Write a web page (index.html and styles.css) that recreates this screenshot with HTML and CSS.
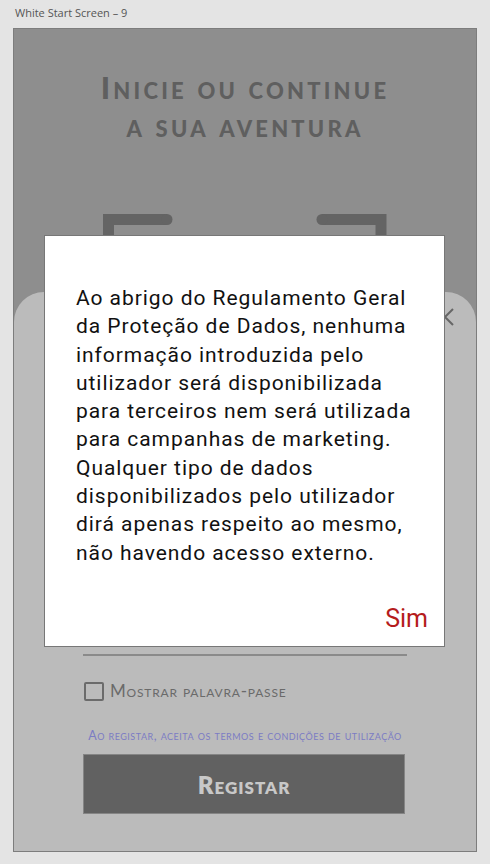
FILE: index.html
```html
<!DOCTYPE html>
<html lang="pt">
<head>
<meta charset="utf-8">
<title>White Start Screen – 9</title>
<link rel="stylesheet" href="styles.css">
</head>
<body>
<div class="caption">White Start Screen – 9</div>
<div class="artboard">
  <h1 class="heading">Inicie ou continue<br>a sua aventura</h1>
  <svg class="frame" width="284" height="78" viewBox="0 0 284 78">
    <path d="M5.5 83 V5.5 H64" fill="none" stroke="#646464" stroke-width="11" stroke-linecap="butt"/>
    <circle cx="64" cy="5.5" r="5.5" fill="#646464"/>
    <path d="M278 83 V5.5 H219" fill="none" stroke="#646464" stroke-width="11"/>
    <circle cx="219" cy="5.5" r="5.5" fill="#646464"/>
  </svg>
  <div class="panel">
    <div class="panel-top">
      <svg class="close" width="18" height="18" viewBox="0 0 18 18">
        <path d="M1 1 L17 17 M17 1 L1 17" stroke="#666" stroke-width="2" fill="none"/>
      </svg>
    </div>
    <div class="form">
      <div class="field"></div>
      <label class="check-row">
        <span class="checkbox"></span>
        <span class="check-label">Mostrar palavra-passe</span>
      </label>
      <p class="terms">Ao registar, aceita os termos e condições de utilização</p>
      <button class="register">Registar</button>
    </div>
  </div>
  <div class="modal">
    <p class="modal-text">Ao abrigo do Regulamento Geral da Proteção de Dados, nenhuma informação introduzida pelo utilizador será disponibilizada para terceiros nem será utilizada para campanhas de marketing. Qualquer tipo de dados disponibilizados pelo utilizador dirá apenas respeito ao mesmo, não havendo acesso externo.</p>
    <div class="modal-actions"><span class="sim">Sim</span></div>
  </div>
</div>
</body>
</html>
```
FILE: styles.css
```css
* { box-sizing: border-box; }
html, body { margin: 0; padding: 0; }
body {
  background: #e4e4e4;
  width: 490px;
  height: 864px;
  overflow: hidden;
  font-family: "Open Sans", "Noto Sans", sans-serif;
}
.caption {
  height: 28px;
  padding: 5px 0 0 15px;
  font-size: 11px;
  color: #555;
  line-height: 16px;
}
.artboard {
  position: relative;
  margin-left: 13px;
  width: 464px;
  height: 824px;
  border: 1px solid #7d7d7d;
  background: #8e8e8e;
  display: flex;
  flex-direction: column;
  overflow: hidden;
}
.heading {
  margin: 0;
  padding-top: 39px;
  height: 185px;
  text-align: center;
  font-family: Lato, "Open Sans", sans-serif;
  font-weight: 900;
  font-variant: small-caps;
  font-size: 31px;
  line-height: 38px;
  letter-spacing: 3.2px;
  color: #5f5f5f;
  flex: none;
}
.frame {
  display: block;
  margin: 0 0 0 89px;
  flex: none;
}
.panel {
  flex: 1;
  background: #bbbbbb;
  border-radius: 30px 30px 0 0;
  display: flex;
  flex-direction: column;
}
.panel-top {
  display: flex;
  justify-content: flex-end;
  padding: 16px 22px 0 0;
  height: 40px;
}
.close { display: block; }
.form {
  width: 324px;
  margin: 0 auto;
  padding-top: 322px;
  display: flex;
  flex-direction: column;
}
.field {
  height: 1px;
  border-bottom: 2px solid #8a8a8a;
}
.check-row {
  display: flex;
  align-items: center;
  gap: 6px;
  margin-top: 25px;
  padding-left: 1px;
}
.checkbox {
  width: 20px;
  height: 19px;
  border: 2px solid #6b6b6b;
  border-radius: 2px;
}
.check-label {
  font-family: Lato, "Open Sans", sans-serif;
  font-variant: small-caps;
  font-size: 17px;
  letter-spacing: 0.8px;
  color: #6a6a6a;
  line-height: 20px;
}
.terms {
  margin: 27px 0 0;
  text-align: center;
  font-family: Lato, "Open Sans", sans-serif;
  font-variant: small-caps;
  font-size: 12.5px;
  letter-spacing: 0.5px;
  color: #7c7cc4;
  line-height: 16px;
  white-space: nowrap;
}
.register {
  margin-top: 10px;
  width: 322px;
  height: 60px;
  background: #616161;
  border: 1px solid #858585;
  font-family: Lato, "Open Sans", sans-serif;
  font-weight: 800;
  font-variant: small-caps;
  font-size: 24px;
  letter-spacing: 1px;
  color: #c8c8c8;
  padding: 0;
}
.modal {
  position: absolute;
  left: 30px;
  top: 206px;
  width: 401px;
  height: 412px;
  background: #fff;
  border: 1px solid #777;
  display: flex;
  flex-direction: column;
  padding: 48px 16px 12px 31px;
}
.modal-text {
  margin: 0;
  font-family: Roboto, "Open Sans", sans-serif;
  font-size: 21px;
  line-height: 28.3px;
  letter-spacing: 0.95px;
  color: #111;
  flex: 1;
}
.modal-actions {
  display: flex;
  justify-content: flex-end;
}
.sim {
  font-family: Roboto, "Open Sans", sans-serif;
  font-size: 25px;
  color: #b51c1c;
  line-height: 30px;
}
```
